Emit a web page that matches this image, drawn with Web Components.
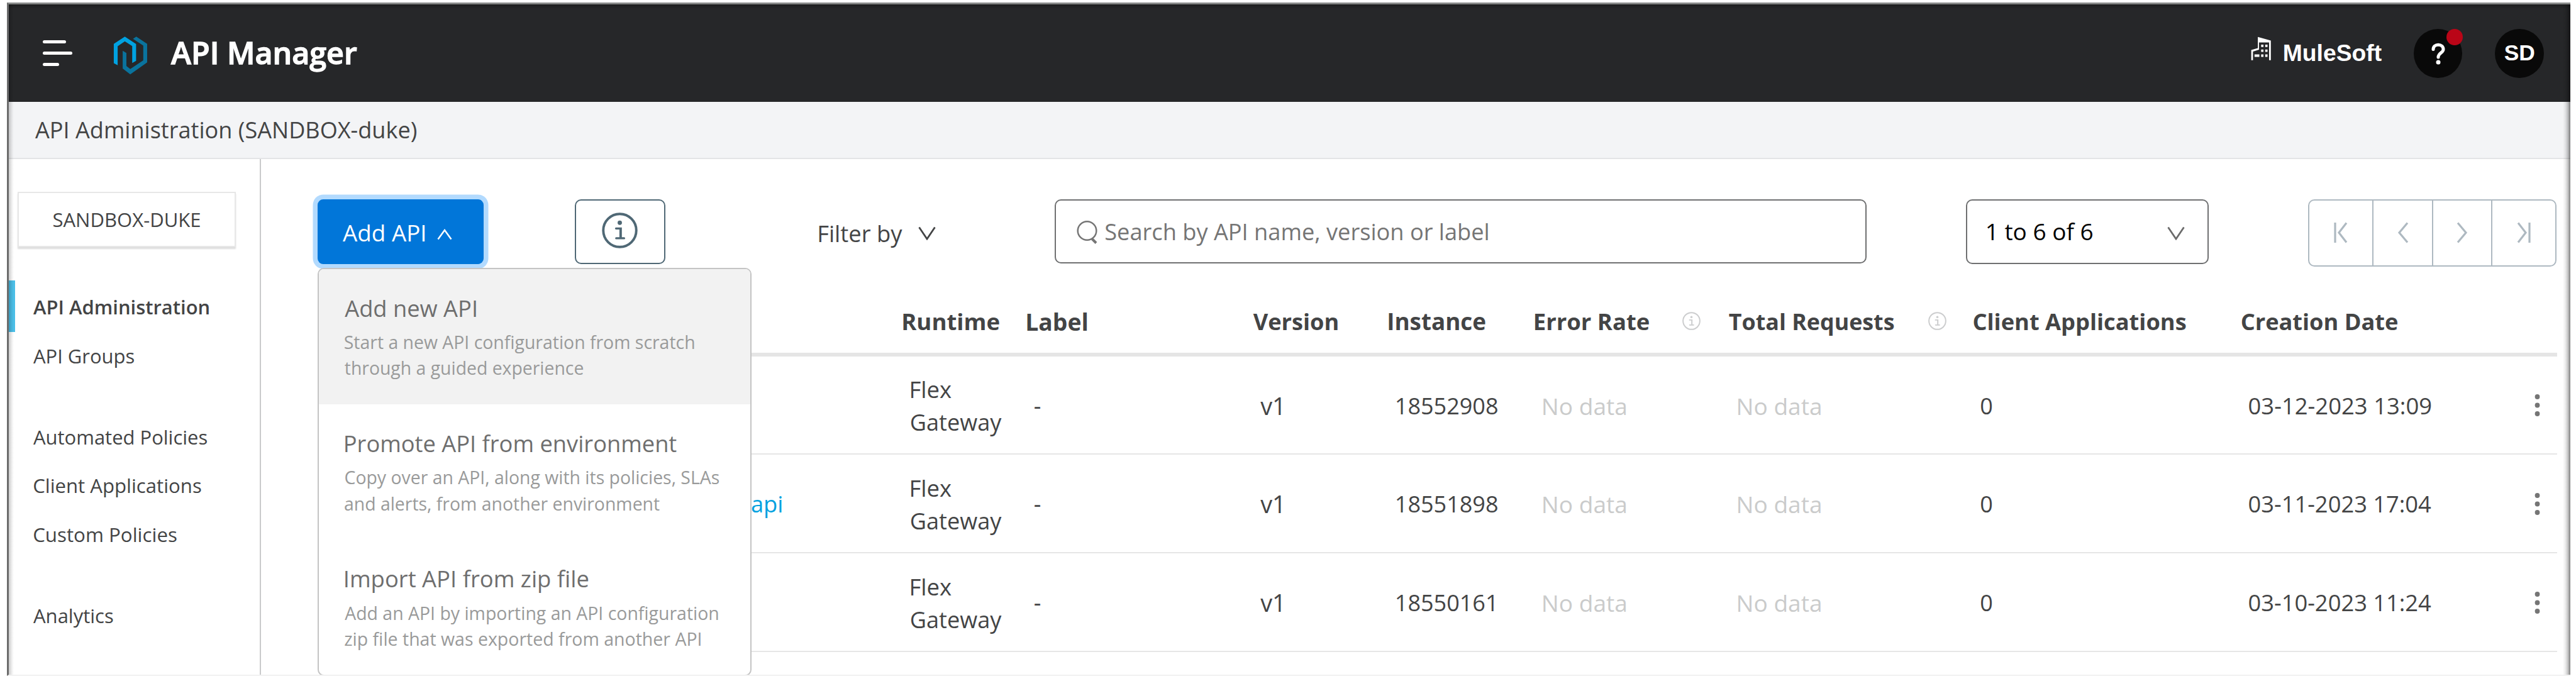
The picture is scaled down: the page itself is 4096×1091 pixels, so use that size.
<!DOCTYPE html>
<html lang="en">
<head>
<meta charset="utf-8">
<title>API Manager</title>
<style>
html,body{margin:0;padding:0;background:#fff}
body{width:4096px;height:1091px;overflow:hidden;font-family:"Open Sans","Noto Sans",sans-serif;color:#434445}
</style>
</head>
<body>
<api-manager-app></api-manager-app>
<script>
const ctx = document.createElement('canvas').getContext('2d');

function define(name, html, setup) {
  const tpl = document.createElement('template');
  tpl.innerHTML = html;
  customElements.define(name, class extends HTMLElement {
    constructor() {
      super();
      this.attachShadow({ mode: 'open' }).appendChild(tpl.content.cloneNode(true));
    }
    connectedCallback() { if (setup) setup.call(this, this.shadowRoot); }
  });
}

/* A single line of text whose box is its ink: w = ink width, size = nominal size, lh = line height. */
define('ui-text', `<style>:host{display:block;white-space:nowrap;flex:none}span{display:inline-block;vertical-align:top}</style><span><slot></slot></span>`,
function (root) {
  const w = +this.getAttribute('w'), size = +(this.getAttribute('size') || 36);
  const lh = +(this.getAttribute('lh') || 49), wt = this.getAttribute('weight') || 400;
  const face = this.getAttribute('face') || '"Open Sans"';
  ctx.font = wt + ' 200px ' + face;
  const m = ctx.measureText(this.textContent);
  const ink = (m.actualBoundingBoxRight + m.actualBoundingBoxLeft) / 200;
  const fs = w ? Math.max(size * .95, Math.min(size * 1.05, w / ink)) : size;
  const bearing = -m.actualBoundingBoxLeft / 200;
  const s = root.querySelector('span');
  s.style.cssText = 'font:' + wt + ' ' + fs + 'px/' + lh + 'px ' + face + ',sans-serif;margin-top:1px;margin-left:' + ((bearing > .05 ? 1 : 0) - bearing * fs) + 'px';
  if (w) this.style.width = w + 'px';
  this.style.height = lh + 'px';
});

define('mule-logo', `<style>:host{display:block;width:54.9px;height:61.1px}svg{display:block;width:100%;height:100%}</style>
<svg viewBox="44 38 178 198"><path fill="#0a739d" d="M93 112l19 11v67l20 16 67-45V85l-53-35 17-11 56 37v96l-87 61-39-30z"/><path fill="#00a2e1" d="M47 176V76l57-37 58 38v87l-20 11V87l-38-24-37 25v98z"/></svg>`);

define('building-icon', `<style>:host{display:block;width:32.7px;height:38.3px}svg{display:block;width:100%;height:100%}</style>
<svg viewBox="50 38 106 124" fill="#fff"><path d="M52 160V108L86 98V40L153 59V160H144V69H92V106L61 116V160Z"/><path d="M103 80h12v12h-12zM124 80h12v12h-12zM103 105h12v12h-12zM124 105h12v12h-12zM103 130h12v13h-12zM124 130h12v13h-12zM69 130h25v13H69z"/></svg>`);

define('info-icon', `<style>:host{display:block;width:var(--s,57px);height:var(--s,57px);color:#4f6875}svg{display:block;width:100%;height:100%}</style>
<svg viewBox="69 72 190 190" fill="currentColor"><circle cx="164" cy="167" r="87.5" fill="none" stroke="currentColor" stroke-width="13"/><circle cx="164" cy="126" r="11.5"/><path d="M144 151h31v52h12a5 5 0 0 1 0 11h-42a5 5 0 0 1 0-11h17v-41h-18a5 5 0 0 1 0-11z"/></svg>`);

define('round-badge', `<style>:host{display:flex;align-items:center;justify-content:center;width:77.6px;height:78px;border-radius:50%;background:#090909;position:relative;flex:none}
i{display:none;position:absolute;right:-.5px;top:0;width:26.2px;height:26.4px;border-radius:50%;background:#ba0517}:host([dot]) i{display:block}</style><slot></slot><i></i>`);

define('app-header', `<style>
:host{display:flex;align-items:center;height:155px;background:#262729;color:#fff;box-sizing:border-box;padding:0 42.2px 0 54px}
.burger{width:47px;height:42px;display:flex;flex-direction:column;justify-content:space-between;flex:none}
.burger b{display:block;height:5.8px;border-radius:3px;background:#fff}
mule-logo{margin:8px 0 0 65.2px;flex:none}.t{margin:-5px 0 0 37px;-webkit-text-stroke:1.3px #fff}
.org{margin-left:auto;display:flex;align-items:center;gap:19.2px}
building-icon{margin-bottom:15px}.org ui-text,.sd ui-text{margin-top:-2px}.q{margin-left:52px}.sd{margin-left:51.8px}
</style>
<div class="burger"><b style="width:36.5px"></b><b></b><b style="width:26px"></b></div>
<mule-logo></mule-logo>
<ui-text class="t" w="295" size="47.5" lh="64" weight="600">API Manager</ui-text>
<div class="org"><building-icon></building-icon><ui-text w="154.6" size="36" weight="700" face="Liberation Sans">MuleSoft</ui-text></div>
<round-badge class="q" dot><svg width="24" height="36" viewBox="0 0 24 36" style="margin-top:2px"><path d="M4 10.5C4 6 7.500 3.200 12 3.200s8 2.800 8 7.200c0 5.600-8 5.800-8 12.600" fill="none" stroke="#fff" stroke-width="5" stroke-linecap="round"/><circle cx="12" cy="31" r="3.500" fill="#fff"/></svg></round-badge>
<round-badge class="sd"><ui-text w="47" size="36" weight="700" face="Liberation Sans">SD</ui-text></round-badge>`);

define('sub-header', `<style>:host{display:flex;align-items:center;box-sizing:border-box;height:91px;background:#f3f4f6;border-bottom:2px solid #e3e4e6;padding-left:42px}ui-text{margin-top:-3px}</style>
<ui-text w="606">API Administration (SANDBOX-duke)</ui-text>`);

define('nav-item', `<style>:host{display:flex;align-items:center;height:77.3px;padding-left:39px;position:relative}:host([active])::before{content:"";position:absolute;left:0;top:-3px;width:10px;height:82px;background:#4bbfe8}</style><slot></slot>`);

define('side-nav', `<style>
:host{display:block;box-sizing:border-box;width:401px;border-right:2px solid #c9cacb;padding-top:52px;flex:none}
.env{margin-left:14px;width:347px;height:88px;box-sizing:border-box;border:2px solid #e7e7e7;box-shadow:0 3px 2px #dedede;display:flex;align-items:center;justify-content:center;margin-bottom:56.2px}
.env ui-text{margin-top:-2px}
.gap{height:52px}
</style>
<div class="env"><ui-text w="233" size="30.9">SANDBOX-DUKE</ui-text></div>
<nav-item active><ui-text w="279" size="30.9" weight="620">API Administration</ui-text></nav-item>
<nav-item><ui-text w="160" size="30.9">API Groups</ui-text></nav-item>
<div class="gap"></div>
<nav-item><ui-text w="276" size="30.9">Automated Policies</ui-text></nav-item>
<nav-item><ui-text w="265.6" size="30.9">Client Applications</ui-text></nav-item>
<nav-item><ui-text w="226.6" size="30.9">Custom Policies</ui-text></nav-item>
<div class="gap"></div>
<nav-item><ui-text w="126.5" size="30.9">Analytics</ui-text></nav-item>`);

define('menu-item', `<style>:host{display:block;height:215.3px;box-sizing:border-box;padding:36.8px 0 0 41px;color:#6e6e6e}:host([hover]){background:#f2f2f2}.d{margin-top:9.4px;color:#999a9a}</style>
<slot name="title"></slot><div class="d"><slot></slot></div>`);

define('add-api', `<style>
:host{display:block;position:relative;width:264px;height:103.2px;flex:none;z-index:2}
.btn{height:100%;box-sizing:border-box;background:#0176d9;border-radius:9px;box-shadow:0 0 0 7.5px #b2dafe;display:flex;align-items:center;padding:2px 0 0 40.5px;color:#fff}
.btn svg{margin:7px 0 0 20px}
.menu{position:absolute;left:.6px;top:109px;width:689.5px;height:648.5px;box-sizing:border-box;border:2px solid #c4c4c4;border-radius:10px;background:#fff;overflow:hidden}
</style>
<div class="btn"><ui-text w="130" weight="460">Add API</ui-text><svg width="24" height="18" viewBox="0 0 24 18"><path d="M1.500 16.500L12 2l10.500 14.500" fill="none" stroke="#fff" stroke-width="2.500"/></svg></div>
<div class="menu">
<menu-item hover><ui-text slot="title" w="208.500">Add new API</ui-text><ui-text w="555.500" size="28.4" lh="41.1">Start a new API configuration from scratch</ui-text><ui-text w="379" size="28.4" lh="41.1">through a guided experience</ui-text></menu-item>
<menu-item><ui-text slot="title" w="526.500">Promote API from environment</ui-text><ui-text w="594" size="28.4" lh="41.1">Copy over an API, along with its policies, SLAs</ui-text><ui-text w="500.5" size="28.4" lh="41.1">and alerts, from another environment</ui-text></menu-item>
<menu-item><ui-text slot="title" w="386">Import API from zip file</ui-text><ui-text w="593.500" size="28.4" lh="41.1">Add an API by importing an API configuration</ui-text><ui-text w="566" size="28.4" lh="41.1">zip file that was exported from another API</ui-text></menu-item>
</div>`);

define('page-buttons', `<style>
:host{display:flex;box-sizing:border-box;width:395.5px;height:106.500px;border:2.5px solid #aeb9c1;border-radius:10px;flex:none}
div{display:flex;align-items:center;justify-content:center;border-right:2px solid #aeb9c1;box-sizing:border-box}
div:last-child{border:0}svg{fill:none;stroke:#aeb9c1;stroke-width:3.2}
</style>
<div style="width:102.5px"><svg width="22" height="34" viewBox="0 0 22 34"><path d="M2 1v32M20 1.500L8 17l12 15.500"/></svg></div>
<div style="width:94.5px"><svg width="18" height="34" viewBox="0 0 18 34"><path d="M16 1.500L3 17l13 15.500"/></svg></div>
<div style="width:94.5px"><svg width="18" height="34" viewBox="0 0 18 34"><path d="M2 1.500L15 17 2 32.500"/></svg></div>
<div style="flex:1"><svg width="22" height="34" viewBox="0 0 22 34"><path d="M20 1v32M2 1.500L14 17 2 32.500"/></svg></div>`);

define('tool-bar', `<style>
:host{display:flex;align-items:flex-start;height:103px;padding:64px 0 0 89.6px}
.info{margin-left:145px;width:144px;height:103px;box-sizing:border-box;border:2.4px solid #4f6875;border-radius:10px;display:flex;justify-content:center;padding-top:18.600px;flex:none}
.filter{margin-left:244px;display:flex;align-items:center;height:103px;padding-top:3px;box-sizing:border-box}
.filter svg{margin:2px 0 0 26px}
.search,.select{box-sizing:border-box;border:2.4px solid #6f7071;border-radius:10px;display:flex;align-items:center;flex:none}
.search{margin-left:189.400px;width:1291px;height:101.500px;padding-left:32.600px;color:#757575}
.search svg{margin-right:13.500px;margin-top:2px}
.select{margin-left:158px;width:386.500px;height:103px;padding:0 36.5px 0 31px;color:#000;justify-content:space-between}
.select svg{margin-top:5px}.select ui-text{margin-top:-4px}
page-buttons{margin-left:157.500px}
</style>
<add-api></add-api>
<div class="info"><info-icon></info-icon></div>
<div class="filter"><ui-text w="132">Filter by</ui-text><svg width="28" height="22" viewBox="0 0 28 22"><path d="M1.500 1.500L14 20 26.500 1.500" fill="none" stroke="#434445" stroke-width="2.800"/></svg></div>
<div class="search"><svg width="33" height="38" viewBox="0 0 33 38" fill="none" stroke="#757575"><circle cx="16.500" cy="17" r="14.800" stroke-width="2.500"/><path d="M24.500 30l6.500 6.500" stroke-width="4"/></svg><ui-text w="608">Search by API name, version or label</ui-text></div>
<div class="select"><ui-text w="167">1 to 6 of 6</ui-text><svg width="28" height="22" viewBox="0 0 28 22"><path d="M1.500 1.500L14 20 26.500 1.500" fill="none" stroke="#6b6b6b" stroke-width="2.800"/></svg></div>
<page-buttons></page-buttons>`);

const GRID = `display:grid;grid-template-columns:930.3px 197.2px 360.2px 214.7px 232.5px 309.7px 387.9px 426.2px 400px 1fr;box-sizing:border-box;`;

define('table-head', `<style>
:host{${GRID}align-items:end;height:146.7px;border-bottom:6.500px solid #e5e5e5;padding-bottom:26px}
div{display:flex;align-items:center}info-icon{--s:29px;color:#cccdce}
</style><span></span>
<ui-text w="152.3" weight="700">Runtime</ui-text><ui-text w="94.5" weight="700">Label</ui-text><ui-text w="134" weight="700">Version</ui-text><ui-text w="153.2" weight="700">Instance</ui-text>
<div><ui-text w="181" weight="700">Error Rate</ui-text><info-icon style="margin-left:54.300px"></info-icon></div>
<div><ui-text w="261.700" weight="700">Total Requests</ui-text><info-icon style="margin-left:54.800px"></info-icon></div>
<ui-text w="337" weight="700">Client Applications</ui-text><ui-text w="247.400" weight="700">Creation Date</ui-text>`);

define('table-row', `<style>
:host{${GRID}align-items:center;height:156.800px;border-bottom:2.500px solid #e6e6e6}
.name{padding-left:690.500px;color:#00a1df}.c{padding-left:12.700px}.n{color:#cacbcb;padding-left:13.500px}
svg{display:block;justify-self:end;margin-right:26.500px}
</style>
<div class="name"><slot></slot></div>
<div class="c"><ui-text w="63.500" lh="52">Flex</ui-text><ui-text w="143.500" lh="52">Gateway</ui-text></div>
<div class="c"><ui-text>-</ui-text></div><div class="c" style="padding-left:11.500px"><ui-text w="33">v1</ui-text></div>
<div class="c id"></div>
<div class="n"><ui-text w="130.500">No data</ui-text></div><div class="n"><ui-text w="130.500">No data</ui-text></div>
<div class="c"><ui-text>0</ui-text></div><div class="c date"></div>
<svg width="9" height="36" viewBox="0 0 9 36" fill="#757575"><circle cx="4.500" cy="5" r="3.900"/><circle cx="4.500" cy="18.500" r="3.900"/><circle cx="4.500" cy="32" r="3.900"/></svg>`,
function (root) {
  root.querySelector('.id').innerHTML = `<ui-text>${this.getAttribute('instance')}</ui-text>`;
  root.querySelector('.date').innerHTML = `<ui-text w="289">${this.getAttribute('date')}</ui-text>`;
});

define('api-table', `<style>:host{display:block;margin:0 21.500px 0 90px}</style>
<table-head></table-head>
<table-row instance="18552908" date="03-12-2023 13:09"></table-row>
<table-row instance="18551898" date="03-11-2023 17:04"><ui-text w="47.300">api</ui-text></table-row>
<table-row instance="18550161" date="03-10-2023 11:24"></table-row>`);

define('api-manager-app', `<style>
:host{display:flex;flex-direction:column;position:relative;box-sizing:border-box;margin:4px 9px 0 11px;height:1070.500px;width:4076px;border-left:3px solid #6c6c6c;border-top:3px solid #868887;border-bottom:2.500px solid #f1f1f1;overflow:hidden}
:host::after{content:"";position:absolute;inset:0;z-index:5;pointer-events:none;background:linear-gradient(to left,rgba(0,0,0,.5),rgba(0,0,0,.22) 4px,rgba(0,0,0,.07) 8px,transparent 12px),linear-gradient(to right,rgba(0,0,0,.2),rgba(0,0,0,.06) 5px,transparent 8px),linear-gradient(rgba(0,0,0,.25),transparent 7px)}
.body{display:flex;flex:1;min-height:0}.main{flex:1;min-width:0}
</style>
<app-header></app-header><sub-header></sub-header>
<div class="body"><side-nav></side-nav><div class="main"><tool-bar></tool-bar><api-table></api-table></div></div>`);
</script>
</body>
</html>
